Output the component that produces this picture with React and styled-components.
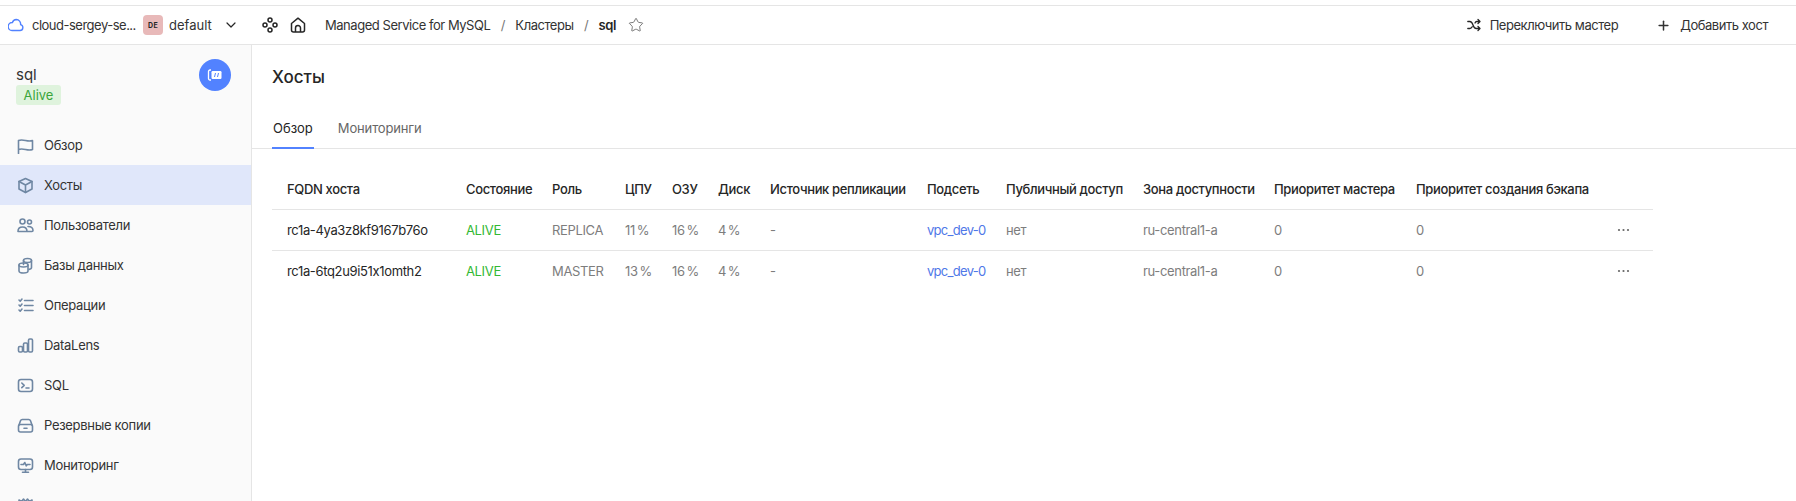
import React from 'react';
import styled, { createGlobalStyle } from 'styled-components';
import { ChevronDown, Plus, Star } from 'lucide-react';

const Global = createGlobalStyle`
  html, body { margin: 0; padding: 0; height: 501px; overflow: hidden; background: #fff; }
  body { font-family: Inter, "Noto Sans", sans-serif; font-size: 13px; color: #262626; }
  * { box-sizing: border-box; }
`;

const Page = styled.div`
  height: 501px;
  width: 1796px;
  display: flex;
  flex-direction: column;
  overflow: hidden;
  padding-top: 5px;
`;
const Header = styled.header`
  height: 40px;
  flex: none;
  display: flex;
  align-items: center;
  justify-content: space-between;
  border-top: 1px solid #e5e5e5;
  border-bottom: 1px solid #e5e5e5;
  padding: 0 28px 0 8px;
  letter-spacing: -0.46px;
`;
const HeaderGroup = styled.div`
  display: flex;
  align-items: center;
`;
const CloudName = styled.span`
  width: 103px;
  margin-left: 8px;
  white-space: nowrap;
  color: #333;
  letter-spacing: -0.5px;
`;
const Badge = styled.span`
  width: 20px;
  height: 20px;
  margin-left: 8px;
  border-radius: 4px;
  background: #e8b9b9;
  display: flex;
  align-items: center;
  justify-content: center;
  font-size: 7px;
  font-weight: 700;
  letter-spacing: 0.3px;
`;
const FolderName = styled.span`
  margin-left: 6px;
  width: 54px;
  color: #333;
  letter-spacing: 0;
`;
const IconSlot = styled.span`
  display: flex;
  margin-left: ${p => p.$ml || 0}px;
  color: ${p => p.$color || '#262626'};
`;
const Crumb = styled.span`
  color: ${p => (p.$current ? '#262626' : '#333')};
  font-weight: ${p => (p.$current ? 600 : 400)};
  margin-left: ${p => p.$ml || 0}px;
  white-space: nowrap;
`;
const Sep = styled.span`
  color: #777;
  width: 25px;
  text-align: center;
`;
const ActionButton = styled.div`
  display: flex;
  align-items: center;
  gap: 9px;
  margin-left: 38px;
  color: #333;
  white-space: nowrap;
`;
const Body = styled.div`
  flex: 1;
  display: flex;
  min-height: 0;
`;
const Sidebar = styled.aside`
  width: 252px;
  flex: none;
  background: #fafafa;
  border-right: 1px solid #e5e5e5;
  overflow: hidden;
`;
const ClusterCard = styled.div`
  height: 80px;
  padding: 14px 20px 0 16px;
  display: flex;
  justify-content: space-between;
  align-items: flex-start;
`;
const ClusterInfo = styled.div`
  padding-top: 7px;
`;
const ClusterName = styled.div`
  font-size: 15px;
  line-height: 18px;
  color: #333;
`;
const StatusTag = styled.div`
  width: 45px;
  height: 20px;
  margin-top: 1px;
  border-radius: 3px;
  background: #dff3dd;
  color: #3ba53b;
  font-size: 13px;
  line-height: 20px;
  text-align: center;
`;
const Avatar = styled.div`
  width: 32px;
  height: 32px;
  border-radius: 50%;
  background: #5282ff;
  display: flex;
  align-items: center;
  justify-content: center;
`;
const NavItem = styled.div`
  height: 40px;
  display: flex;
  align-items: center;
  gap: 10px;
  padding-left: 17px;
  background: ${p => (p.$active ? '#e0e7fa' : 'transparent')};
  color: #333;
  letter-spacing: -0.3px;
  flex: none;
`;
const NavIcon = styled.svg`
  width: 17px;
  height: 17px;
  fill: none;
  stroke: #6f87a3;
  stroke-width: 1.6;
  stroke-linecap: round;
  stroke-linejoin: round;
  flex: none;
`;
const Main = styled.main`
  flex: 1;
  min-width: 0;
`;
const Title = styled.h1`
  margin: 0;
  padding: 21px 0 0 20px;
  font-size: 17px;
  line-height: 22px;
  font-weight: 500;
  color: #262626;
`;
const Tabs = styled.div`
  margin-top: 22px;
  height: 39px;
  padding-left: 20px;
  display: flex;
  gap: 23px;
  border-bottom: 1px solid #e5e5e5;
`;
const Tab = styled.div`
  height: 39px;
  line-height: 36px;
  padding: 0 1px;
  letter-spacing: ${p => (p.$active ? 0 : '-0.15px')};
  color: ${p => (p.$active ? '#262626' : '#666')};
  border-bottom: 2px solid ${p => (p.$active ? '#5282ff' : 'transparent')};
`;
const Table = styled.table`
  margin: 20px 0 0 20px;
  border-collapse: collapse;
  table-layout: fixed;
  width: 1381px;
  letter-spacing: -0.35px;
`;
const Th = styled.th`
  height: 40px;
  padding: 0 0 0 ${p => (p.$first ? 15 : 0)}px;
  text-align: left;
  font-weight: 500;
  font-size: 13px;
  color: #262626;
  white-space: nowrap;
  border-bottom: 1px solid #e5e5e5;
`;
const Td = styled.td`
  height: 41px;
  padding: 0 0 0 ${p => (p.$first ? 15 : 0)}px;
  color: ${p => p.$color || '#7d7d7d'};
  white-space: nowrap;
  word-spacing: -1.5px;
  border-bottom: ${p => (p.$last ? 'none' : '1px solid #e5e5e5')};
`;
const SubnetLink = styled.span`
  color: #4f78e8;
  letter-spacing: -0.7px;
`;
const MoreDots = styled.svg`
  display: block;
  width: 13px;
  height: 4px;
  fill: #666;
`;

const I = {
  flag: <path d="M1.500 16.500V3.500c5-2 9 2 14 0V12.500c-5 2-9-2-14 0" />,
  box: <><path d="M8.500 1.500 15 4.500v7.500l-6.500 3.500L2 12V4.500z" /><path d="M2 4.500l6.500 3.500L15 4.500M8.500 8v7.500" /></>,
  users: <><circle cx="5.500" cy="4.500" r="2.500" /><circle cx="12.500" cy="5" r="2" /><path d="M1 14.500c0-3 2-4.500 4.500-4.500s4.500 1.500 4.500 4.500z" /><path d="M11 9.500c3 0 5 1.500 5 4 0 .7-.5 1-1 1h-4.500" /></>,
  db: <><path d="M6.500 7.500v-4c0-1.200 2-2 4-2s4 .8 4 2v7c0 1-1 1.600-2.500 1.900" /><path d="M6.500 3.500c0 1.200 2 2 4 2s4-.8 4-2" /><path d="M2 8c0-1.200 2-2 4.500-2s4.500.8 4.500 2v6c0 1.200-2 2-4.500 2S2 15.200 2 14z" /><path d="M2 8c0 1.200 2 2 4.500 2S11 9.200 11 8" /></>,
  ops: <><path d="M7.500 3.500H16M7.500 8.500H16M7.500 13.500H16" /><path d="M2 3l1.200 1.200L5 2M2 8l1.200 1.200L5 7M2 13l1.200 1.200L5 12" /></>,
  chart: <><rect x="1.500" y="9.500" width="4" height="5.500" rx="1.200" /><rect x="6.500" y="6" width="4" height="9" rx="1.200" /><rect x="11.500" y="2" width="4" height="13" rx="1.200" /></>,
  sql: <><rect x="1.500" y="2.500" width="14" height="12" rx="2.500" /><path d="M4.800 6l2.400 2.300-2.400 2.300M9 11h3" /></>,
  backup: <><path d="M2 8l1.500-4.300c.3-.8 1-1.200 1.800-1.200h6.400c.8 0 1.500.4 1.800 1.200L15 8" /><rect x="1.500" y="7.500" width="14" height="7.500" rx="2" /><path d="M7 11.300h3" /></>,
  monitor: <><rect x="1.500" y="2" width="14" height="10.500" rx="2.500" /><path d="M4 7.500h2.500l1.300-2 1.500 3.300 1-1.300H13M8.500 12.500V15M5.500 15.200h6" /></>,
  logs: <path d="M2 15V3l2.500 1.500L6.500 2l2 2.500 2-2.500 2 2.500L15 3v12z" />,
};
const nav = [
  ['Обзор', 'flag'], ['Хосты', 'box', true], ['Пользователи', 'users'], ['Базы данных', 'db'],
  ['Операции', 'ops'], ['DataLens', 'chart'], ['SQL', 'sql'], ['Резервные копии', 'backup'],
  ['Мониторинг', 'monitor'], ['', 'logs'],
];
const widths = [194, 86, 73, 47, 46, 52, 157, 79, 137, 131, 142, 201, 36];
const heads = ['FQDN хоста', 'Состояние', 'Роль', 'ЦПУ', 'ОЗУ', 'Диск', 'Источник репликации', 'Подсеть', 'Публичный доступ', 'Зона доступности', 'Приоритет мастера', 'Приоритет создания бэкапа', ''];
const rows = [
  ['rc1a-4ya3z8kf9167b76o', 'REPLICA', '11 %'],
  ['rc1a-6tq2u9i51x1omth2', 'MASTER', '13 %'],
];

export default function App() {
  return (
    <Page>
      <Global />
      <Header>
        <HeaderGroup>
          <IconSlot>
            <svg width="16" height="14" viewBox="0 0 16 14" fill="none" stroke="#5282ff" strokeWidth="1.4" strokeLinejoin="round"><path d="M4 12.500h8a3 3 0 0 0 .6-5.900A4.500 4.500 0 0 0 8.300 1.500a4.200 4.200 0 0 0-3.900 3A4 4 0 0 0 4 12.500z" /></svg>
          </IconSlot>
          <CloudName>cloud-sergey-se...</CloudName>
          <Badge>DE</Badge>
          <FolderName>default</FolderName>
          <IconSlot><ChevronDown size={16} strokeWidth={1.8} /></IconSlot>
          <IconSlot $ml={23}>
            <svg width="16" height="16" viewBox="0 0 16 16" fill="none" stroke="#262626" strokeWidth="1.500"><circle cx="8" cy="3" r="2" /><circle cx="3" cy="8" r="2" /><circle cx="13" cy="8" r="2" /><circle cx="8" cy="13" r="2" /></svg>
          </IconSlot>
          <IconSlot $ml={12}>
            <svg width="16" height="16" viewBox="0 0 16 16" fill="none" stroke="#262626" strokeWidth="1.500" strokeLinejoin="round"><path d="M1.500 6.500 8 1.200l6.500 5.300V13a2 2 0 0 1-2 2h-9a2 2 0 0 1-2-2z" /><path d="M5.500 15v-4a2.500 2.500 0 0 1 5 0v4" /></svg>
          </IconSlot>
          <Crumb $ml={19}>Managed Service for MySQL</Crumb>
          <Sep>/</Sep>
          <Crumb>Кластеры</Crumb>
          <Sep>/</Sep>
          <Crumb $current>sql</Crumb>
          <IconSlot $ml={12} $color="#666"><Star size={16} strokeWidth={1.300} /></IconSlot>
        </HeaderGroup>
        <HeaderGroup>
          <ActionButton>
            <svg width="14" height="14" viewBox="0 0 14 14" fill="none" stroke="#262626" strokeWidth="1.300" strokeLinecap="round" strokeLinejoin="round"><path d="M.8 3.500h2c1.500 0 2.300.8 3.200 3.500s1.700 3.500 3.200 3.500h3.500M.8 10.500h2c1 0 1.800-.5 2.400-1.700M8 5c.4-1 .9-1.500 1.700-1.500h3M11 1.500l2 2-2 2M11 8.500l2 2-2 2" /></svg>
            Переключить мастер
          </ActionButton>
          <ActionButton>
            <Plus size={15} strokeWidth={2.4} />
            Добавить хост
          </ActionButton>
        </HeaderGroup>
      </Header>
      <Body>
        <Sidebar>
          <ClusterCard>
            <ClusterInfo>
              <ClusterName>sql</ClusterName>
              <StatusTag>Alive</StatusTag>
            </ClusterInfo>
            <Avatar>
              <svg width="16" height="16" viewBox="0 0 16 16" fill="none" stroke="#fff" strokeWidth="1.300"><path d="M4 13H3a1.500 1.500 0 0 1-1.500-1.500v-7A1.500 1.500 0 0 1 3 3h1" /><rect x="4.500" y="4" width="10" height="8" rx="1.200" fill="#fff" stroke="none" /><path d="M8.500 6l-1 4M11.500 6l-1 4" stroke="#5282ff" strokeWidth="1" /></svg>
            </Avatar>
          </ClusterCard>
          {nav.map(([label, icon, active]) => (
            <NavItem key={icon} $active={active}>
              <NavIcon viewBox="0 0 17 17">{I[icon]}</NavIcon>
              {label}
            </NavItem>
          ))}
        </Sidebar>
        <Main>
          <Title>Хосты</Title>
          <Tabs>
            <Tab $active>Обзор</Tab>
            <Tab>Мониторинги</Tab>
          </Tabs>
          <Table>
            <colgroup>{widths.map((w, i) => <col key={i} style={{ width: w }} />)}</colgroup>
            <thead>
              <tr>{heads.map((h, i) => <Th key={i} $first={i === 0}>{h}</Th>)}</tr>
            </thead>
            <tbody>
              {rows.map(([fqdn, role, cpu], r) => {
                const last = r === rows.length - 1;
                return (
                  <tr key={fqdn}>
                    <Td $first $last={last} $color="#262626">{fqdn}</Td>
                    <Td $last={last} $color="#33b833">ALIVE</Td>
                    <Td $last={last}>{role}</Td>
                    <Td $last={last}>{cpu}</Td>
                    <Td $last={last}>16 %</Td>
                    <Td $last={last}>4 %</Td>
                    <Td $last={last}>-</Td>
                    <Td $last={last}><SubnetLink>vpc_dev-0</SubnetLink></Td>
                    <Td $last={last}>нет</Td>
                    <Td $last={last}>ru-central1-a</Td>
                    <Td $last={last}>0</Td>
                    <Td $last={last}>0</Td>
                    <Td $last={last}>
                      <MoreDots viewBox="0 0 13 4"><circle cx="2" cy="2" r="1.100" /><circle cx="6.500" cy="2" r="1.100" /><circle cx="11" cy="2" r="1.100" /></MoreDots>
                    </Td>
                  </tr>
                );
              })}
            </tbody>
          </Table>
        </Main>
      </Body>
    </Page>
  );
}
